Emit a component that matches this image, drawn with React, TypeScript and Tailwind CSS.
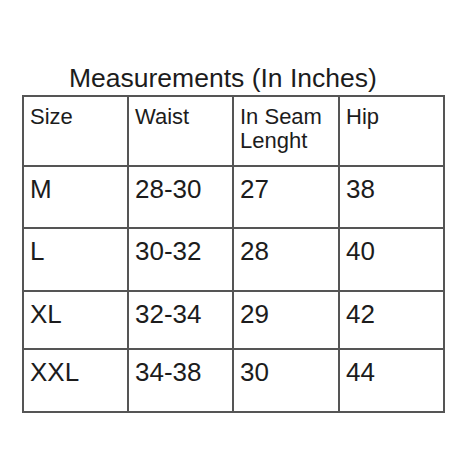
const headers = ["Size", "Waist", "In Seam Lenght", "Hip"];

const rows = [
  ["M", "28-30", "27", "38"],
  ["L", "30-32", "28", "40"],
  ["XL", "32-34", "29", "42"],
  ["XXL", "34-38", "30", "44"],
];

const App = () => {
  return (
    <div
      className="w-[474px] h-[474px] bg-white text-[#1c1c1c] pt-[63px]"
      style={{ fontFamily: '"Liberation Sans", Arial, sans-serif' }}
    >
      {/* Title */}
      <h1 className="ml-[69px] text-[26.5px] leading-[30px] font-normal">
        Measurements (In Inches)
      </h1>

      {/* Size chart */}
      <div className="mt-[2px] ml-[22px] w-max grid grid-cols-[105px_105px_106px_105px] grid-rows-[70px_62px_63px_58px_63px] border-l-2 border-t-2 border-[#555]">
        {headers.map((h) => (
          <div
            key={h}
            className="border-r-2 border-b-2 border-[#555] pl-[6px] pt-[8px] text-[22px] leading-[24px] pr-2"
          >
            {h}
          </div>
        ))}
        {rows.map((row) =>
          row.map((cell, i) => (
            <div
              key={row[0] + i}
              className="border-r-2 border-b-2 border-[#555] pl-[6px] pt-[7px] text-[26px] leading-[30px]"
            >
              {cell}
            </div>
          ))
        )}
      </div>
    </div>
  );
};

export default App;
